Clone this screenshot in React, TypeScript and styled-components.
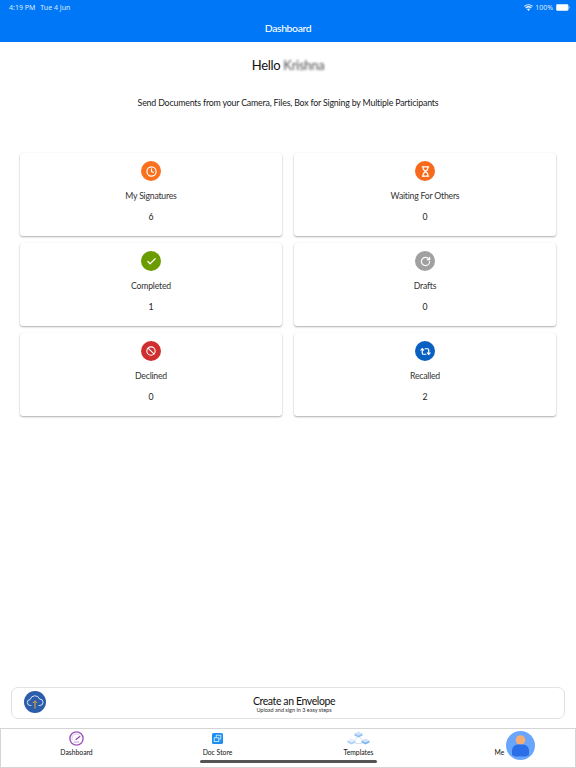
import React from "react";
import styled, { createGlobalStyle } from "styled-components";
import { Clock, Hourglass, Check, RotateCw, Ban, Repeat2 } from "lucide-react";

const Global = createGlobalStyle`
  html, body { margin: 0; padding: 0; background: #fff; }
  #root { width: 576px; height: 768px; }
  * { box-sizing: border-box; }
`;

const Page = styled.div`
  position: relative;
  width: 576px;
  height: 768px;
  overflow: hidden;
  display: flex;
  flex-direction: column;
  background: #fff;
  font-family: Lato, "Noto Sans", sans-serif;
  color: #1c1c1c;
`;

const Header = styled.header`
  height: 42px;
  flex: none;
  background: #0077f7;
  color: #fff;
  display: flex;
  flex-direction: column;
`;

const StatusBar = styled.div`
  height: 14px;
  padding: 0 6px 0 9px;
  display: flex;
  align-items: center;
  justify-content: space-between;
  font-size: 7px;
  color: #dcecff;
  font-family: "Noto Sans", sans-serif;
`;

const StatusGroup = styled.div`
  display: flex;
  align-items: center;
  gap: 5px;
`;

const StatusRight = styled(StatusGroup)`
  gap: 2px;
`;

const HeaderTitle = styled.div`
  flex: 1;
  display: flex;
  align-items: center;
  justify-content: center;
  font-size: 10.4px;
  letter-spacing: -0.35px;
  font-weight: 500;
`;

const Greeting = styled.h1`
  margin: 14px 0 0;
  height: 18px;
  line-height: 18px;
  text-align: center;
  font-size: 13px;
  letter-spacing: -0.3px;
  font-weight: 400;
  color: #111;
`;

const BlurredName = styled.span`
  filter: blur(0.8px);
  opacity: 0.75;
`;

const Intro = styled.p`
  margin: 22px 0 0;
  height: 14px;
  line-height: 14px;
  text-align: center;
  font-size: 8.8px;
  letter-spacing: -0.18px;
  color: #1a1a1a;
`;

const Grid = styled.section`
  margin: 43px 20px 0;
  display: grid;
  grid-template-columns: 262px 262px;
  grid-auto-rows: 83px;
  column-gap: 12px;
  row-gap: 7px;
`;

const Card = styled.article`
  background: #fff;
  border-radius: 3px;
  box-shadow: 0 1px 2px rgba(0, 0, 0, 0.32), 0 0 1px rgba(0, 0, 0, 0.05);
  display: flex;
  flex-direction: column;
  align-items: center;
  padding-top: 8px;
`;

const StatusCircle = styled.div<{ $bg: string }>`
  width: 20px;
  height: 20px;
  border-radius: 50%;
  background: ${(p) => p.$bg};
  color: #fff;
  display: flex;
  align-items: center;
  justify-content: center;
`;

const CardLabel = styled.div`
  margin-top: 8px;
  height: 14px;
  line-height: 14px;
  font-size: 8.7px;
  letter-spacing: -0.22px;
  color: #333;
`;

const CardValue = styled.div`
  margin-top: 7px;
  height: 14px;
  line-height: 14px;
  font-size: 8.7px;
  color: #222;
`;

const Spacer = styled.div`
  flex: 1;
`;

const EnvelopeButton = styled.button`
  position: relative;
  flex: none;
  height: 32px;
  margin: 0 11px 9px;
  padding: 0 0 0 12px;
  background: #fff;
  border: 1px solid #e2e2e2;
  border-radius: 7px;
  display: flex;
  flex-direction: column;
  align-items: center;
  justify-content: center;
  font-family: inherit;
  color: #111;
`;

const UploadBadge = styled.div`
  position: absolute;
  left: 12px;
  top: 3px;
  width: 22px;
  height: 22px;
`;

const EnvelopeTitle = styled.div`
  font-size: 10.5px;
  letter-spacing: -0.4px;
  line-height: 11px;
  margin-top: 2px;
`;

const EnvelopeSub = styled.div`
  font-size: 5.5px;
  line-height: 6px;
  color: #333;
`;

const TabBar = styled.nav`
  flex: none;
  height: 40px;
  padding: 0 5px;
  border: 1px solid #d4d4d4;
  display: grid;
  grid-template-columns: repeat(4, 141px);
`;

const Tab = styled.div`
  position: relative;
  display: flex;
  flex-direction: column;
  align-items: center;
  padding-top: 2px;
`;

const TabIcon = styled.div`
  height: 15px;
  display: flex;
  align-items: center;
  justify-content: center;
`;

const TabLabel = styled.div`
  margin-top: 1px;
  font-size: 6.8px;
  line-height: 10px;
  color: #111;
`;

const MeLabel = styled(TabLabel)`
  margin-top: 16px;
`;

const Avatar = styled.div`
  position: absolute;
  left: 77px;
  top: 2px;
  width: 29px;
  height: 29px;
`;

const HomeIndicator = styled.div`
  position: absolute;
  left: 200px;
  bottom: 5px;
  width: 177px;
  height: 3px;
  border-radius: 2px;
  background: #555;
`;

const cards = [
  { label: "My Signatures", value: 6, bg: "#f9711d", Icon: Clock, size: 11 },
  { label: "Waiting For Others", value: 0, bg: "#f8691c", Icon: Hourglass, size: 11 },
  { label: "Completed", value: 1, bg: "#6a9c00", Icon: Check, size: 11 },
  { label: "Drafts", value: 0, bg: "#a0a0a0", Icon: RotateCw, size: 11 },
  { label: "Declined", value: 0, bg: "#d02f2f", Icon: Ban, size: 10 },
  { label: "Recalled", value: 2, bg: "#0a60c2", Icon: Repeat2, size: 11 },
];

export default function App() {
  return (
    <Page>
      <Global />
      <Header>
        <StatusBar>
          <StatusGroup>
            <span>4:19 PM</span>
            <span>Tue 4 Jun</span>
          </StatusGroup>
          <StatusRight>
            <svg width="9" height="7" viewBox="0 0 18 14" fill="#eaf4ff">
              <path d="M9 14 6 10.6a4.4 4.4 0 0 1 6 0L9 14ZM4.4 8.8 2.6 6.8a9.6 9.6 0 0 1 12.8 0l-1.8 2a7 7 0 0 0-9.2 0ZM1.3 5.3 0 3.8a13.5 13.5 0 0 1 18 0l-1.3 1.5a11.5 11.5 0 0 0-15.4 0Z" />
            </svg>
            <span>100%</span>
            <svg width="14" height="7" viewBox="0 0 14 7" style={{ marginLeft: 1 }}>
              <rect x="0.25" y="0.25" width="12" height="6.5" rx="1.4" fill="#fff" stroke="#cfe4ff" strokeWidth="0.5" />
              <path d="M13 2.4c.6.1.9.5.9 1.1s-.3 1-.9 1.1Z" fill="#9cc8ff" />
            </svg>
          </StatusRight>
        </StatusBar>
        <HeaderTitle>Dashboard</HeaderTitle>
      </Header>

      <Greeting>
        Hello <BlurredName>Krishna</BlurredName>
      </Greeting>
      <Intro>Send Documents from your Camera, Files, Box for Signing by Multiple Participants</Intro>

      <Grid>
        {cards.map(({ label, value, bg, Icon, size }) => (
          <Card key={label}>
            <StatusCircle $bg={bg}>
              <Icon size={size} strokeWidth={2.6} />
            </StatusCircle>
            <CardLabel>{label}</CardLabel>
            <CardValue>{value}</CardValue>
          </Card>
        ))}
      </Grid>

      <Spacer />

      <EnvelopeButton>
        <UploadBadge>
          <svg width="22" height="22" viewBox="0 0 22 22">
            <circle cx="11" cy="11" r="11" fill="#2b5daa" />
            <path d="M7 14.5H6.5a3 3 0 0 1-.3-6 4.9 4.9 0 0 1 9.400-.4 3.2 3.2 0 0 1 .4 6.400H15" fill="none" stroke="#e8eef8" strokeWidth="0.9" strokeLinecap="round" />
            <path d="M11 17.500V10M8.800 12 11 9.800 13.200 12" fill="none" stroke="#f0a63a" strokeWidth="1" />
          </svg>
        </UploadBadge>
        <EnvelopeTitle>Create an Envelope</EnvelopeTitle>
        <EnvelopeSub>Upload and sign in 3 easy steps</EnvelopeSub>
      </EnvelopeButton>

      <TabBar>
        <Tab>
          <TabIcon>
            <svg width="15" height="15" viewBox="0 0 15 15" fill="none">
              <circle cx="7.500" cy="7.500" r="6.600" stroke="#9c55bd" strokeWidth="1.400" />
              <path d="M3.400 9A4.300 4.300 0 0 1 11.300 5.500" stroke="#c79ada" strokeWidth="1" strokeDasharray="1 .7" />
              <path d="M7 8.400 10.800 5.600" stroke="#8e44ad" strokeWidth="1.200" strokeLinecap="round" />
              <path d="M5 11h5" stroke="#c79ada" strokeWidth="1" />
            </svg>
          </TabIcon>
          <TabLabel>Dashboard</TabLabel>
        </Tab>
        <Tab>
          <TabIcon>
            <svg width="11" height="11" viewBox="0 0 11 11" fill="none">
              <rect width="11" height="11" rx="1.500" fill="#1d8ff0" />
              <rect x="4.200" y="2.200" width="4.600" height="3.800" stroke="#dff0ff" strokeWidth="0.800" />
              <rect x="2.200" y="4.800" width="4.600" height="3.800" fill="#1d8ff0" stroke="#dff0ff" strokeWidth="0.800" />
            </svg>
          </TabIcon>
          <TabLabel>Doc Store</TabLabel>
        </Tab>
        <Tab>
          <TabIcon>
            <svg width="23" height="15" viewBox="0 0 23 15" fill="none">
              <path d="M7 10 11.500 5 16 10M8 12.500h7" stroke="#b9cde6" strokeWidth="0.600" />
              <path d="M11.500 0.500 15.500 2.500 11.500 4.500 7.500 2.500Z" fill="#cfe4fa" />
              <path d="M7.500 2.500 11.500 4.500V6.500L7.500 4.500ZM15.500 2.500 11.500 4.500V6.500L15.500 4.500Z" fill="#8fc0f2" />
              <path d="M4.500 7.500 8.500 9.500 4.500 11.500 0.500 9.500Z" fill="#e3effc" />
              <path d="M0.500 9.500 4.500 11.500V13.500L0.500 11.500ZM8.500 9.500 4.500 11.500V13.500L8.500 11.500Z" fill="#a9d0f7" />
              <path d="M18.500 7.500 22.500 9.500 18.500 11.500 14.500 9.500Z" fill="#cfe4fa" />
              <path d="M14.500 9.500 18.500 11.500V13.500L14.500 11.500ZM22.500 9.500 18.500 11.500V13.500L22.500 11.500Z" fill="#7cb5f0" />
            </svg>
          </TabIcon>
          <TabLabel>Templates</TabLabel>
        </Tab>
        <Tab>
          <MeLabel>Me</MeLabel>
          <Avatar>
            <svg width="29" height="29" viewBox="0 0 29 29">
              <circle cx="14.500" cy="14.500" r="14.500" fill="#68a5fb" />
              <circle cx="14.500" cy="9" r="4.800" fill="#f4ab74" />
              <path d="M6 24v-4.500a6 6 0 0 1 6-6h5a6 6 0 0 1 6 6V24a12 12 0 0 1-3 1.500H9A12 12 0 0 1 6 24Z" fill="#2a6fe8" />
            </svg>
          </Avatar>
        </Tab>
      </TabBar>
      <HomeIndicator />
    </Page>
  );
}
